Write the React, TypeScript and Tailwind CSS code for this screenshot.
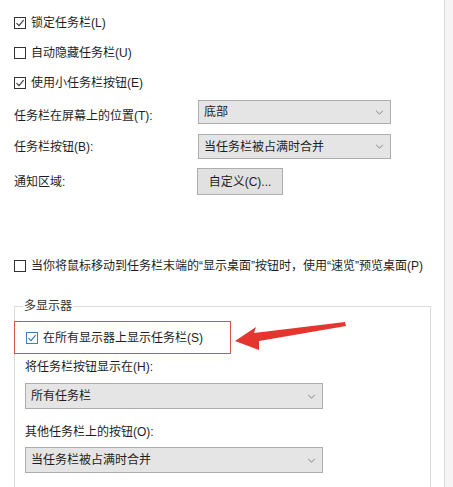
import React from 'react';

const FONT = { fontFamily: '"Liberation Sans", "Noto Sans CJK SC", sans-serif' };

type BoxProps = { checked?: boolean; focused?: boolean; label: string };

const CheckRow: React.FC<BoxProps> = ({ checked, focused, label }) => (
  <div className="flex h-[16px] items-center gap-[5px]">
    <span
      className={`flex h-[12px] w-[12px] shrink-0 items-center justify-center border bg-white ${
        focused ? 'border-[#3d7fc4]' : 'border-[#333333]'
      }`}
    >
      {checked && (
        <svg viewBox="0 0 10 10" className="h-[10px] w-[10px]" fill="none">
          <polyline
            points="1.5,5.2 4,7.6 8.6,2.2"
            stroke={focused ? '#2f74c0' : '#333333'}
            strokeWidth="1.1"
          />
        </svg>
      )}
    </span>
    <span className="whitespace-nowrap">{label}</span>
  </div>
);

const Chevron = () => (
  <svg viewBox="0 0 10 6" className="h-[5px] w-[9px]" fill="none">
    <polyline points="1,1 5,5 9,1" stroke="#707070" strokeWidth="1" />
  </svg>
);

const Select: React.FC<{ value: string; className: string }> = ({ value, className }) => (
  <div
    className={`flex items-center justify-between border border-[#adadad] bg-[#e5e5e5] pl-[5px] pr-[6px] ${className}`}
  >
    <span className="whitespace-nowrap">{value}</span>
    <Chevron />
  </div>
);

export default function App() {
  return (
    <div
      className="flex h-[487px] w-[453px] overflow-hidden bg-white text-[12px] leading-[16px] text-[#1e1e1e]"
      style={FONT}
    >
      <div className="relative w-[444px] shrink-0 pl-[14px] pt-[15px]">
        <div className="flex flex-col gap-[14px]">
          <CheckRow checked label="锁定任务栏(L)" />
          <CheckRow label="自动隐藏任务栏(U)" />
          <CheckRow checked label="使用小任务栏按钮(E)" />
        </div>

        <div className="mt-[9px] flex items-center">
          <span className="mt-[8px] w-[184px] whitespace-nowrap">任务栏在屏幕上的位置(T):</span>
          <Select value="底部" className="h-[24px] w-[193px]" />
        </div>
        <div className="mt-[10px] flex items-center">
          <span className="w-[184px] whitespace-nowrap">任务栏按钮(B):</span>
          <Select value="当任务栏被占满时合并" className="h-[25px] w-[193px]" />
        </div>
        <div className="mt-[9px] flex items-center">
          <span className="w-[183px] whitespace-nowrap">通知区域:</span>
          <div className="flex h-[27px] w-[86px] items-center justify-center border border-[#adadad] bg-[#e1e1e1]">
            自定义(C)...
          </div>
        </div>

        <div className="mt-[63px]">
          <CheckRow label={'当你将鼠标移动到任务栏末端的“显示桌面”按钮时，使用“速览”预览桌面(P)'} />
        </div>

        <div className="relative mt-[32px] w-[417px] border border-[#dcdcdc] pb-[20px] pl-[10px]">
          <span className="-mt-[8px] ml-[-2px] block h-[14px] w-fit bg-white px-[1px] leading-[14px] text-[#333]">
            多显示器
          </span>
          <div className="mt-[17px] pl-[1px]">
            <CheckRow checked focused label="在所有显示器上显示任务栏(S)" />
          </div>
          <div className="mt-[13px] whitespace-nowrap">将任务栏按钮显示在(H):</div>
          <Select value="所有任务栏" className="mt-[8px] h-[26px] w-[298px]" />
          <div className="mt-[15px] whitespace-nowrap">其他任务栏上的按钮(O):</div>
          <Select value="当任务栏被占满时合并" className="mt-[7px] h-[26px] w-[298px]" />

          {/* annotation */}
          <div className="absolute left-[-1px] top-[14px] h-[33px] w-[217px] border border-[#d9534f]" />
        </div>

        <svg
          className="pointer-events-none absolute left-0 top-0"
          width="444"
          height="487"
          viewBox="0 0 444 487"
        >
          <polygon
            points="235,341 256,327 254,333 345,322 346,326 259,341 259,350"
            fill="#e5352f"
          />
        </svg>
      </div>
      <div className="flex-1 border-l border-[#dadada] bg-[#f6f4f4]" />
    </div>
  );
}
